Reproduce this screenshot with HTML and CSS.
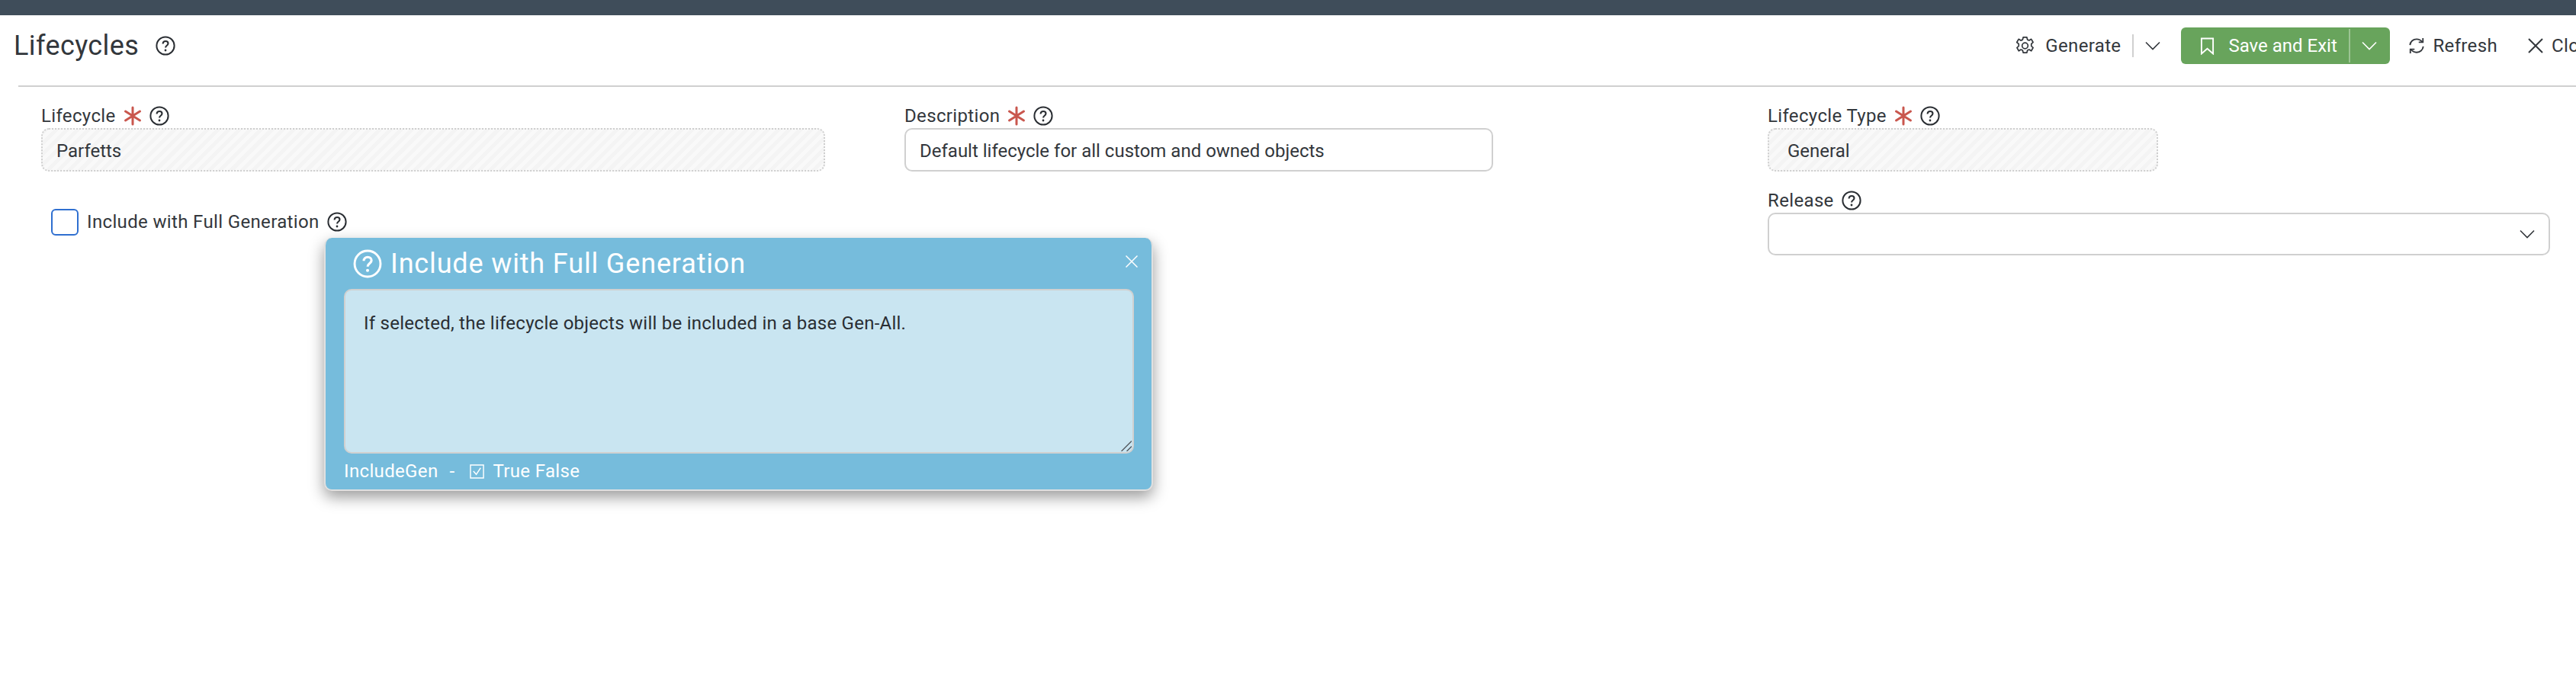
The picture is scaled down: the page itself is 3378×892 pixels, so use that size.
FILE: index.html
```html
<!DOCTYPE html>
<html lang="en">
<head>
<meta charset="utf-8">
<title>Lifecycles</title>
<link rel="stylesheet" href="styles.css">
</head>
<body>
<svg class="defs" width="0" height="0" aria-hidden="true">
  <symbol id="help" viewBox="0 0 26 26">
    <circle cx="13" cy="13" r="11.6" fill="none" stroke="currentColor" stroke-width="2"/>
    <path d="M9.6 10.4c0-2.2 1.5-3.4 3.5-3.4s3.4 1.2 3.4 3c0 1.500-.9 2.200-2 3-.9.7-1.400 1.300-1.400 2.600" fill="none" stroke="currentColor" stroke-width="2.100"/>
    <circle cx="13" cy="19" r="1.400" fill="currentColor"/>
  </symbol>
  <symbol id="star" viewBox="0 0 24 26">
    <path d="M12 2v22M2.500 7l19 12M21.500 7l-19 12" fill="none" stroke="#c9574e" stroke-width="3" stroke-linecap="round"/>
  </symbol>
  <symbol id="chev" viewBox="0 0 20 12">
    <path d="M1 1.500l9 9 9-9" fill="none" stroke="currentColor" stroke-width="1.600"/>
  </symbol>
</svg>

<div class="topbar"></div>

<header class="header">
  <div class="title-wrap">
    <h1 class="title">Lifecycles</h1>
    <svg class="help title-help"><use href="#help"/></svg>
  </div>
  <div class="actions">
    <div class="action">
      <svg class="gear" viewBox="0 0 26 26" fill="none" stroke="currentColor" stroke-width="1.800" stroke-linejoin="round">
        <circle cx="13" cy="13" r="4"/>
        <path d="M10.500 1.500h5l.8 3.300 2.300 1 2.900-1.800 2.500 4.300-2.400 2.300v2.800l2.400 2.300-2.500 4.300-2.900-1.800-2.300 1-.8 3.300h-5l-.8-3.300-2.300-1-2.900 1.800-2.500-4.300 2.400-2.300v-2.800L1.800 8.300 4.300 4 7.200 5.800l2.500-1z"/>
      </svg>
      <span class="generate-text">Generate</span>
      <span class="sep"></span>
      <svg class="chev generate-chev"><use href="#chev"/></svg>
    </div>
    <div class="save">
      <svg class="bookmark" viewBox="0 0 20 24" fill="none" stroke="currentColor" stroke-width="2"><path d="M2 1.500h16v21l-8-7-8 7z"/></svg>
      <span class="save-text">Save and Exit</span>
      <span class="save-sep"></span>
      <svg class="chev save-chev"><use href="#chev"/></svg>
    </div>
    <div class="action refresh">
      <svg class="refresh-icon" viewBox="0 0 24 24" fill="none" stroke="currentColor" stroke-width="2">
        <path d="M2.500 11C3 6 7 2.500 12 2.500c3.300 0 5.800 1.300 8 4M21.500 13c-.5 5-4.500 8.500-9.500 8.500-3.300 0-5.800-1.300-8-4"/>
        <path d="M21 1v6h-6M3 23v-6h6"/>
      </svg>
      <span>Refresh</span>
    </div>
    <div class="action close">
      <svg class="x-icon" viewBox="0 0 20 20" fill="none" stroke="currentColor" stroke-width="2"><path d="M1 1l18 18M19 1L1 19"/></svg>
      <span>Close</span>
    </div>
  </div>
</header>
<div class="divider"></div>

<main class="form">
  <div class="field">
    <label class="label">Lifecycle <svg class="star"><use href="#star"/></svg><svg class="help"><use href="#help"/></svg></label>
    <div class="input readonly full">Parfetts</div>
  </div>
  <div class="field">
    <label class="label">Description <svg class="star"><use href="#star"/></svg><svg class="help"><use href="#help"/></svg></label>
    <div class="input desc">Default lifecycle for all custom and owned objects</div>
  </div>
  <div class="field">
    <label class="label">Lifecycle Type <svg class="star"><use href="#star"/></svg><svg class="help"><use href="#help"/></svg></label>
    <div class="input readonly type">General</div>
  </div>
  <div class="check-row">
    <span class="checkbox"></span>
    <span class="check-label">Include with Full Generation</span>
    <svg class="help"><use href="#help"/></svg>
  </div>
  <div class="spacer"></div>
  <div class="field release">
    <label class="label">Release <svg class="help"><use href="#help"/></svg></label>
    <div class="select"><svg class="chev"><use href="#chev"/></svg></div>
  </div>
</main>

<aside class="popup">
  <div class="popup-head">
    <svg class="popup-help"><use href="#help"/></svg>
    <span class="popup-title">Include with Full Generation</span>
    <svg class="popup-x" viewBox="0 0 16 16" fill="none" stroke="currentColor" stroke-width="1.500"><path d="M.5.500l15 15M15.500.500l-15 15"/></svg>
  </div>
  <div class="popup-body">
    <textarea class="popup-text" readonly>If selected, the lifecycle objects will be included in a base Gen-All.</textarea>
    <svg class="grip" viewBox="0 0 14 14" fill="none" stroke="#555b60" stroke-width="1.400"><path d="M.5 14L14 .5M7.500 14L14 7.500"/></svg>
  </div>
  <div class="popup-foot">
    <span>IncludeGen</span>
    <span class="dash">-</span>
    <svg class="tf-icon" viewBox="0 0 20 20" fill="none" stroke="currentColor" stroke-width="1.500"><path d="M1 1h18v18H1z"/><path d="M5 9.500l4 4.500 6-9"/></svg>
    <span>True False</span>
  </div>
</aside>
</body>
</html>
```

FILE: styles.css
```css
* { box-sizing: border-box; }

html, body {
  margin: 0;
  height: 892px;
  overflow: hidden;
  background: #fff;
}

body {
  position: relative;
  font-family: "Roboto", "Noto Sans", sans-serif;
  font-size: 24px;
  letter-spacing: .35px;
  color: #33373c;
}

.defs { position: absolute; }

.topbar { height: 20px; background: #3f4d5a; }

.header {
  width: 3408px;
  height: 92px;
  padding: 16px 0 0 18px;
  display: flex;
  justify-content: space-between;
  align-items: flex-start;
}

.title-wrap { display: flex; align-items: center; height: 48px; }
.title { margin: 0; font-size: 36px; font-weight: 400; line-height: 48px; letter-spacing: .4px; }
.title-help { margin-left: 22px; }

.help { width: 26px; height: 26px; flex: none; color: #2a2e33; }

.actions { display: flex; align-items: center; height: 48px; }
.action { display: flex; align-items: center; }
.gear { width: 25px; height: 26px; margin-right: 14px; }
.sep { width: 2px; height: 30px; background: #d0d0d0; margin: 0 15px; }
.chev { width: 20px; height: 12px; display: block; }

.save {
  display: flex;
  align-items: center;
  height: 48px;
  width: 274px;
  margin-left: 27px;
  padding-left: 25px;
  background: #68a45c;
  border-radius: 6px;
  color: #fff;
}
.bookmark { width: 19px; height: 23px; margin-right: 18px; }
.save-text { letter-spacing: 0; }
.save-sep { width: 2px; height: 44px; background: #9cc493; margin: 0 15px; }
.save-chev { color: #fff; }

.refresh { margin-left: 24px; }
.refresh-icon { width: 22px; height: 24px; margin-right: 10px; }
.close { margin-left: 40px; }
.x-icon { width: 20px; height: 20px; margin-right: 11px; }

.divider { height: 2px; margin-left: 24px; background: #d0d0d0; }

.form {
  display: grid;
  grid-template-columns: repeat(3, 1132px);
  padding: 22px 0 0 54px;
}

.field { display: flex; flex-direction: column; }

.label {
  display: flex;
  align-items: center;
  height: 32px;
  gap: 10px;
}
.star { width: 24px; height: 26px; flex: none; }

.input {
  height: 57px;
  border: 2px solid #d0d0d0;
  border-radius: 10px;
  display: flex;
  align-items: center;
  padding: 2px 0 0 18px;
  letter-spacing: 0;
}
.readonly {
  border: 2px dotted #cfcfcf;
  background: repeating-linear-gradient(135deg, #f4f4f4 0 5px, #f9f9f9 5px 10px);
}
.full { width: 1028px; }
.desc { width: 772px; }
.type { width: 512px; padding-left: 24px; }

.select {
  width: 1026px;
  height: 56px;
  border: 2px solid #d0d0d0;
  border-radius: 10px;
  display: flex;
  align-items: center;
  justify-content: flex-end;
  padding-right: 18px;
}

.check-row {
  display: flex;
  align-items: center;
  height: 36px;
  margin: 48px 0 0 13px;
}
.checkbox {
  width: 36px;
  height: 35px;
  border: 2px solid #2f6fd0;
  border-radius: 6px;
  margin-right: 11px;
}
.check-label { margin-right: 10px; }
.spacer { height: 0; }
.release { margin-top: 22px; }

.popup {
  position: absolute;
  left: 425px;
  top: 312px;
  width: 1087px;
  height: 332px;
  padding: 0 23px 0 24px;
  background: #76bcdc;
  border-right: 2px solid #e0e0e0;
  border-bottom: 2px solid #e0e0e0;
  border-left: 2px solid #e0e0e0;
  border-radius: 10px;
  box-shadow: 0 8px 20px rgba(0, 0, 0, .4);
  color: #fff;
}

.popup-head {
  position: relative;
  display: flex;
  align-items: center;
  height: 67px;
  padding-left: 12px;
}
.popup-help { width: 38px; height: 38px; color: #fff; margin-right: 11px; }
.popup-title { font-size: 36px; letter-spacing: .85px; }
.popup-x {
  position: absolute;
  right: -5px;
  top: 23px;
  width: 16px;
  height: 16px;
}

.popup-body { position: relative; }

.popup-text {
  display: block;
  width: 100%;
  height: 216px;
  padding: 28px 24px;
  margin: 0;
  border: 2px solid #d0d0d0;
  border-radius: 10px;
  background: #c9e5f1;
  color: #2a2e33;
  font: inherit;
  letter-spacing: .25px;
  line-height: 30px;
  outline: none;
  resize: none;
}

.grip {
  position: absolute;
  right: 3px;
  bottom: 3px;
  width: 14px;
  height: 14px;
}

.popup-foot {
  display: flex;
  align-items: center;
  height: 46px;
}
.dash { margin: 0 15px 0 15px; }
.tf-icon { width: 19px; height: 19px; margin: 0 11px 0 5px; }
```
